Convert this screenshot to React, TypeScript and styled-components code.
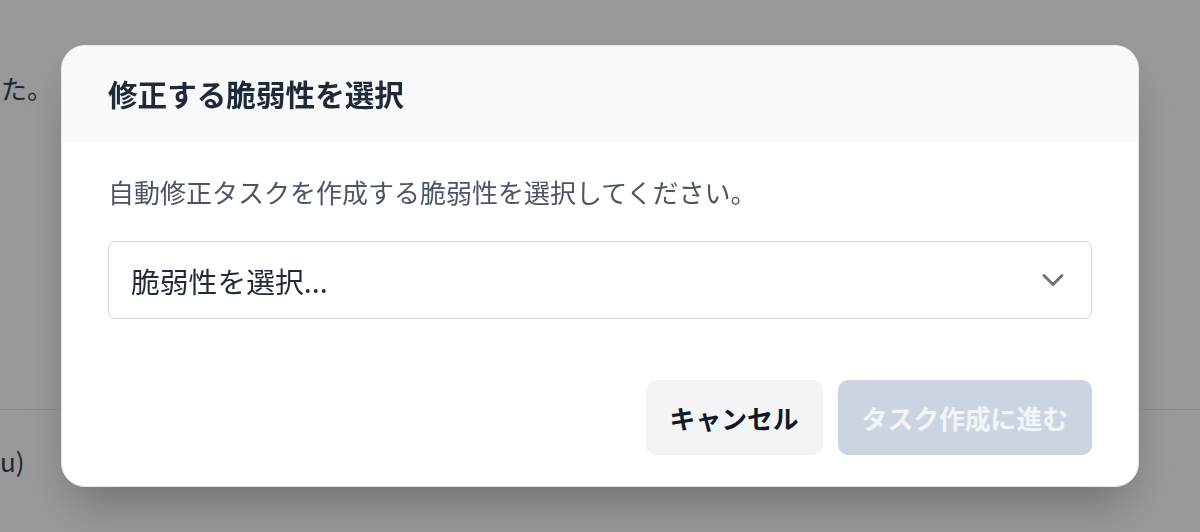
import React from "react";
import styled, { createGlobalStyle } from "styled-components";

const GlobalStyle = createGlobalStyle`
  html, body {
    margin: 0;
    padding: 0;
    background: #ffffff;
    font-family: "Noto Sans CJK JP", "Noto Sans", "Liberation Sans", sans-serif;
  }
  * { box-sizing: border-box; }
`;

const Page = styled.div`
  min-height: 100vh;
  background: #ffffff;
  color: #374151;
`;

const TopSection = styled.section`
  height: 410px;
  border-bottom: 1px solid #e5e7eb;
  padding-top: 68px;
`;

const BottomSection = styled.section`
  padding-top: 31px;
`;

const PageLine = styled.p<{ $indent: number }>`
  margin: 0 0 0 ${(p) => p.$indent}px;
  white-space: nowrap;
  font-size: 26px;
  line-height: 40px;
`;

const Overlay = styled.div`
  position: fixed;
  inset: 0;
  background: rgba(0, 0, 0, 0.4);
  display: flex;
  align-items: center;
  justify-content: center;
`;

const Dialog = styled.div`
  width: 1078px;
  background: #ffffff;
  border-radius: 24px;
  overflow: hidden;
  border: 1px solid #e5e7eb;
  box-shadow: 0 25px 50px -12px rgba(0, 0, 0, 0.3);
  display: flex;
  flex-direction: column;
`;

const Header = styled.div`
  height: 97px;
  background: #f8fafc;
  display: flex;
  align-items: center;
  padding: 0 46px;
`;

const Title = styled.h2`
  margin: 0;
  font-size: 29.6px;
  font-weight: 700;
  color: #1f2937;
  line-height: 1.3;
`;

const Body = styled.div`
  padding: 30px 46px;
  display: flex;
  flex-direction: column;
  gap: 30px;
`;

const Description = styled.p`
  margin: 0;
  font-size: 26px;
  line-height: 38px;
  color: #4b5563;
`;

const SelectTrigger = styled.button`
  height: 78px;
  width: 100%;
  border: 1px solid #d1d5db;
  border-radius: 7px;
  background: #ffffff;
  display: flex;
  align-items: center;
  justify-content: space-between;
  padding: 0 20px 0 22px;
  font-family: inherit;
  font-size: 28.8px;
  color: #1f2937;
  cursor: pointer;
`;

const Chevron = styled.svg`
  width: 36px;
  height: 36px;
  color: #6b7280;
  flex: none;
`;

const Footer = styled.div`
  padding: 31px 46px 31px;
  display: flex;
  justify-content: flex-end;
  gap: 15px;
`;

const Button = styled.button<{ $variant: "secondary" | "primary" }>`
  height: 75px;
  padding: 0 24px;
  border: none;
  border-radius: 10px;
  font-family: inherit;
  font-size: 25.8px;
  font-weight: 700;
  background: ${(p) => (p.$variant === "primary" ? "#cbd5e1" : "#f3f4f6")};
  color: ${(p) => (p.$variant === "primary" ? "#f1f5f9" : "#111827")};
  cursor: ${(p) => (p.$variant === "primary" ? "not-allowed" : "pointer")};
`;

export default function App() {
  return (
    <>
      <GlobalStyle />
      <Page>
        <TopSection>
          <PageLine $indent={1}>た。</PageLine>
        </TopSection>
        <BottomSection>
          <PageLine $indent={0}>u)</PageLine>
        </BottomSection>
      </Page>
      <Overlay>
        <Dialog role="dialog" aria-labelledby="dlg-title">
          <Header>
            <Title id="dlg-title">修正する脆弱性を選択</Title>
          </Header>
          <Body>
            <Description>自動修正タスクを作成する脆弱性を選択してください。</Description>
            <SelectTrigger type="button">
              <span>脆弱性を選択...</span>
              <Chevron viewBox="0 0 24 24" fill="none" stroke="currentColor" strokeWidth={2} strokeLinecap="round" strokeLinejoin="round">
                <path d="m6 9 6 6 6-6" />
              </Chevron>
            </SelectTrigger>
          </Body>
          <Footer>
            <Button type="button" $variant="secondary">キャンセル</Button>
            <Button type="button" $variant="primary" disabled>タスク作成に進む</Button>
          </Footer>
        </Dialog>
      </Overlay>
    </>
  );
}
